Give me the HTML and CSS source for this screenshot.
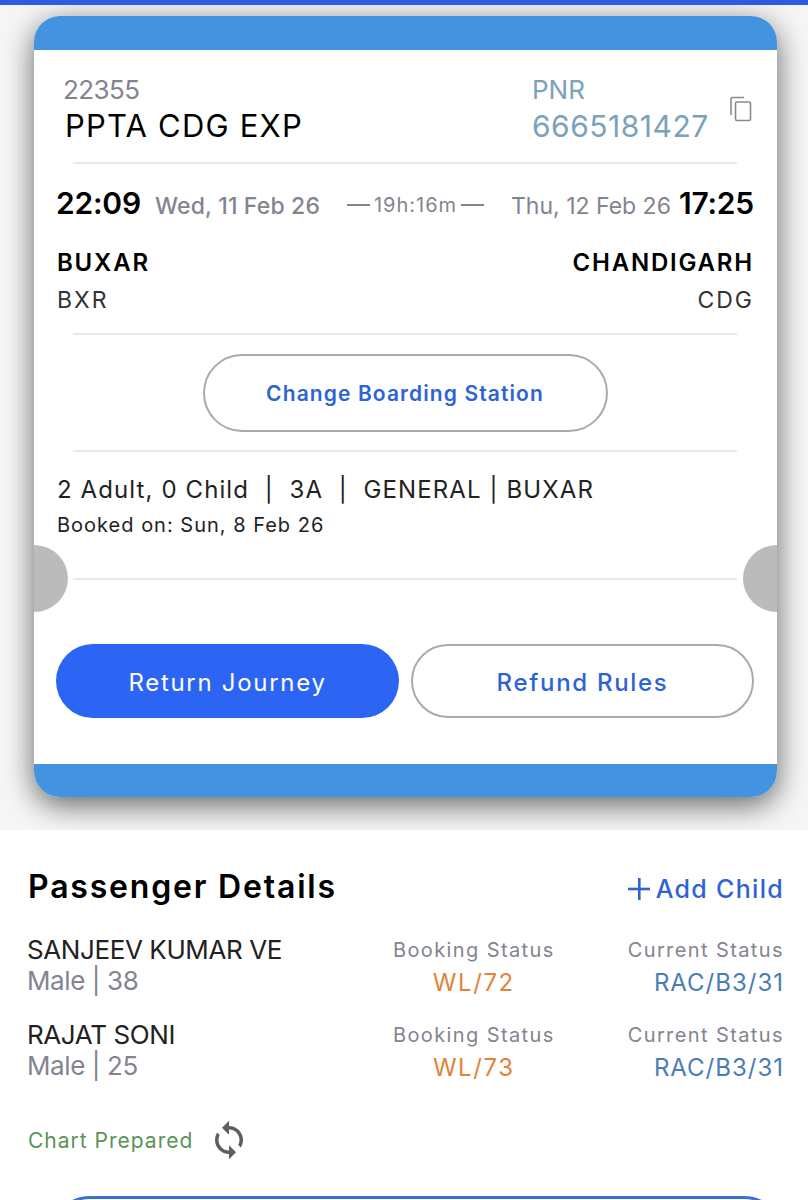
FILE: index.html
```html
<!DOCTYPE html>
<html lang="en">
<head>
    <meta charset="UTF-8">
    <meta name="viewport" content="width=device-width, initial-scale=1.0">
    <title>Booking Details</title>
    <link rel="stylesheet" href="styles.css">
</head>
<body>
    <div class="top-bar"></div>

    <section class="ticket-area">
        <div class="ticket">
            <div class="ticket-band"></div>
            <div class="ticket-body">
                <div class="train-row">
                    <div class="train-info">
                        <div class="train-no">22355</div>
                        <div class="train-name">PPTA CDG EXP</div>
                    </div>
                    <div class="pnr">
                        <div class="pnr-label">PNR</div>
                        <div class="pnr-no">6665181427</div>
                    </div>
                    <svg class="copy-icon" viewBox="0 0 24 26" width="24" height="26" fill="none" stroke="#8a8a8a" stroke-width="1.6">
                        <path d="M2 19V3C2 2 2.7 1.5 3.5 1.5H15"/>
                        <rect x="6.5" y="6" width="15" height="18.5" rx="1.5"/>
                    </svg>
                </div>
                <hr class="rule">

                <div class="time-row">
                    <div class="time-side">
                        <span class="time">22:09</span>
                        <span class="date date-from">Wed, 11 Feb 26</span>
                    </div>
                    <div class="duration"><i></i>19h:16m<i></i></div>
                    <div class="time-side">
                        <span class="date date-to">Thu, 12 Feb 26</span>
                        <span class="time">17:25</span>
                    </div>
                </div>

                <div class="station-row">
                    <div>
                        <div class="station">BUXAR</div>
                        <div class="code">BXR</div>
                    </div>
                    <div class="station-end">
                        <div class="station">CHANDIGARH</div>
                        <div class="code">CDG</div>
                    </div>
                </div>
                <hr class="rule">

                <div class="boarding-row">
                    <button class="boarding-btn" type="button">Change Boarding Station</button>
                </div>
                <hr class="rule">

                <div class="booking-line">2 Adult, 0 Child &nbsp;|&nbsp; 3A &nbsp;|&nbsp; GENERAL | BUXAR</div>
                <div class="booked-on">Booked on: Sun, 8 Feb 26</div>
                <hr class="rule rule-tear">

                <div class="action-row">
                    <button class="action-btn action-primary" type="button">Return Journey</button>
                    <button class="action-btn action-outline" type="button">Refund Rules</button>
                </div>
            </div>
            <div class="ticket-band ticket-band-end"></div>
            <div class="notch notch-left"></div>
            <div class="notch notch-right"></div>
        </div>
    </section>

    <section class="passengers">
        <div class="passengers-head">
            <h2>Passenger Details</h2>
            <a class="add-child" href="#">
                <svg class="plus" viewBox="0 0 22 22" width="22" height="22" fill="#2e63d6">
                    <rect x="10" y="0" width="2.6" height="22"/>
                    <rect x="0" y="9.7" width="22" height="2.6"/>
                </svg>
                Add Child
            </a>
        </div>

        <div class="passenger">
            <div class="who">
                <div class="who-name">SANJEEV KUMAR VE</div>
                <div class="who-sub">Male | 38</div>
            </div>
            <div class="status">
                <div class="status-label">Booking Status</div>
                <div class="status-wl">WL/72</div>
            </div>
            <div class="status status-end">
                <div class="status-label">Current Status</div>
                <div class="status-rac">RAC/B3/31</div>
            </div>
        </div>

        <div class="passenger">
            <div class="who">
                <div class="who-name">RAJAT SONI</div>
                <div class="who-sub">Male | 25</div>
            </div>
            <div class="status">
                <div class="status-label">Booking Status</div>
                <div class="status-wl">WL/73</div>
            </div>
            <div class="status status-end">
                <div class="status-label">Current Status</div>
                <div class="status-rac">RAC/B3/31</div>
            </div>
        </div>

        <div class="chart-row">
            <span class="chart-text">Chart Prepared</span>
            <svg class="sync-icon" viewBox="0 0 24 24" width="42" height="42" fill="#5f5f5f">
                <path d="M12 4V1L8 5l4 4V6c3.31 0 6 2.69 6 6 0 1.01-.25 1.97-.7 2.8l1.46 1.46C19.54 15.03 20 13.57 20 12c0-4.42-3.58-8-8-8zm0 14c-3.31 0-6-2.69-6-6 0-1.01.25-1.97.7-2.8L5.24 7.74C4.46 8.97 4 10.43 4 12c0 4.42 3.58 8 8 8v3l4-4-4-4v3z"/>
            </svg>
        </div>

        <div class="next-btn"></div>
    </section>
</body>
</html>
```

FILE: styles.css
```css
* {
    box-sizing: border-box;
}

html, body {
    height: 1200px;
    overflow: hidden;
}

body {
    margin: 0;
    background-color: #fff;
    font-family: Inter, "Open Sans", sans-serif;
    color: #000;
}

.top-bar {
    height: 5px;
    background-color: #2f5be0;
}

.ticket-area {
    height: 825px;
    padding: 11px 31px 0 34px;
    background-color: #f6f6f6;
    overflow: hidden;
}

.ticket {
    position: relative;
    height: 781px;
    background-color: #fff;
    border-radius: 26px;
    overflow: hidden;
    box-shadow: 0 8px 30px rgba(0, 0, 0, 0.6);
}

.ticket-band {
    height: 34px;
    background-color: #4393e0;
}

.ticket-band-end {
    height: 33px;
}

.ticket-body {
    height: 714px;
    padding: 0 23px 0 22px;
}

.train-row {
    position: relative;
    display: flex;
    height: 112px;
    padding: 24px 8px 0 7px;
}

.train-info {
    flex: 1;
}

.train-no {
    font-size: 26px;
    line-height: 32px;
    color: #82858f;
    letter-spacing: -0.6px;
}

.train-name {
    margin: 2px 0 0 2px;
    font-size: 31px;
    line-height: 36px;
    letter-spacing: 1.2px;
}

.pnr {
    width: 214px;
    color: #7aa2bc;
}

.pnr-label {
    font-size: 26px;
    line-height: 32px;
}

.pnr-no {
    margin-top: 2px;
    font-size: 30px;
    line-height: 36px;
    letter-spacing: 0.5px;
}

.copy-icon {
    position: absolute;
    top: 46px;
    right: 1px;
}

.rule {
    height: 2px;
    margin: 0 17px;
    border: none;
    background-color: #e8e8e8;
}

.time-row {
    display: flex;
    justify-content: space-between;
    align-items: baseline;
    height: 55px;
    padding-top: 21px;
}

.time-side {
    display: flex;
    align-items: baseline;
}

.time {
    font-size: 30px;
    font-weight: 600;
    letter-spacing: -0.2px;
}

.date {
    font-size: 23px;
    color: #82858f;
}

.date-from {
    margin-left: 14px;
    font-weight: 500;
    letter-spacing: 0.15px;
}

.date-to {
    margin-right: 8px;
    letter-spacing: 0;
}

.duration {
    display: flex;
    align-items: center;
    gap: 4px;
    position: relative;
    top: -8px;
    font-size: 20px;
    color: #82858f;
    letter-spacing: 1px;
}

.duration i {
    width: 23px;
    height: 2px;
    background-color: #82858f;
}

.station-row {
    display: flex;
    justify-content: space-between;
    height: 114px;
    padding: 30px 0 0 1px;
}

.station-end {
    text-align: right;
}

.station {
    font-size: 24px;
    line-height: 28px;
    font-weight: 600;
    letter-spacing: 1.8px;
}

.code {
    margin-top: 9px;
    font-size: 23px;
    line-height: 28px;
    color: #333;
    letter-spacing: 2px;
}

.boarding-row {
    display: flex;
    justify-content: center;
    height: 115px;
    padding-top: 19px;
}

.boarding-btn {
    width: 405px;
    height: 78px;
    border: 2px solid #aaa;
    border-radius: 39px;
    background-color: #fff;
    color: #2e63d6;
    font-family: inherit;
    font-size: 21px;
    font-weight: 600;
    letter-spacing: 1.1px;
}

.booking-line {
    margin: 22px 0 0 1px;
    font-size: 24px;
    line-height: 32px;
    color: #222;
    letter-spacing: 1.1px;
}

.booked-on {
    margin: 6px 0 0 1px;
    font-size: 20px;
    line-height: 26px;
    color: #222;
    letter-spacing: 1px;
}

.rule-tear {
    margin-top: 40px;
}

.action-row {
    display: grid;
    grid-template-columns: 1fr 1fr;
    gap: 12px;
    margin-top: 64px;
}

.action-btn {
    height: 74px;
    padding: 3px 0 0;
    border-radius: 37px;
    font-family: inherit;
    font-size: 24px;
    letter-spacing: 1.7px;
}

.action-primary {
    border: none;
    background-color: #2c65f4;
    color: #fff;
}

.action-outline {
    border: 2px solid #aaa;
    background-color: #fff;
    color: #2e63d6;
    font-weight: 500;
}

.notch {
    position: absolute;
    top: 529px;
    width: 68px;
    height: 67px;
    border-radius: 50%;
    background-color: #bbb;
}

.notch-left {
    left: -34px;
}

.notch-right {
    right: -34px;
}

.passengers {
    height: 370px;
    padding: 36px 24px 0 28px;
    overflow: hidden;
}

.passengers-head {
    display: flex;
    justify-content: space-between;
    align-items: center;
    height: 40px;
    margin-bottom: 19px;
}

.passengers-head h2 {
    margin: 0;
    font-size: 32px;
    font-weight: 600;
    letter-spacing: 1.8px;
}

.add-child {
    display: flex;
    align-items: center;
    gap: 6px;
    padding-top: 5px;
    color: #2e63d6;
    font-size: 25px;
    font-weight: 500;
    letter-spacing: 1.3px;
    text-decoration: none;
}

.passenger {
    display: flex;
    height: 85px;
    padding-top: 9px;
}

.who {
    width: 293px;
    margin-left: -1px;
    flex: none;
}

.who-name {
    font-size: 26px;
    line-height: 32px;
    color: #222;
    letter-spacing: -0.4px;
}

.who-sub {
    margin-top: -1px;
    font-size: 26px;
    line-height: 32px;
    color: #82858f;
    letter-spacing: -0.4px;
}

.status {
    flex: 1;
    text-align: center;
}

.status-end {
    flex: none;
    text-align: right;
}

.status-label {
    margin-top: 2px;
    font-size: 20px;
    line-height: 28px;
    color: #82858f;
    letter-spacing: 1.4px;
}

.status-wl {
    margin-top: 2px;
    font-size: 24px;
    line-height: 34px;
    color: #e28437;
    letter-spacing: 1.6px;
}

.status-rac {
    margin-top: 2px;
    font-size: 24px;
    line-height: 34px;
    color: #4a7cb8;
    letter-spacing: 1px;
}

.chart-row {
    display: flex;
    align-items: center;
    gap: 15px;
    margin-top: 17px;
    height: 56px;
}

.chart-text {
    font-size: 21px;
    color: #5b9356;
    letter-spacing: 1px;
}

.next-btn {
    height: 80px;
    margin: 28px 0 0 22px;
    border: 3px solid #3f6fd0;
    border-radius: 40px;
}
```
